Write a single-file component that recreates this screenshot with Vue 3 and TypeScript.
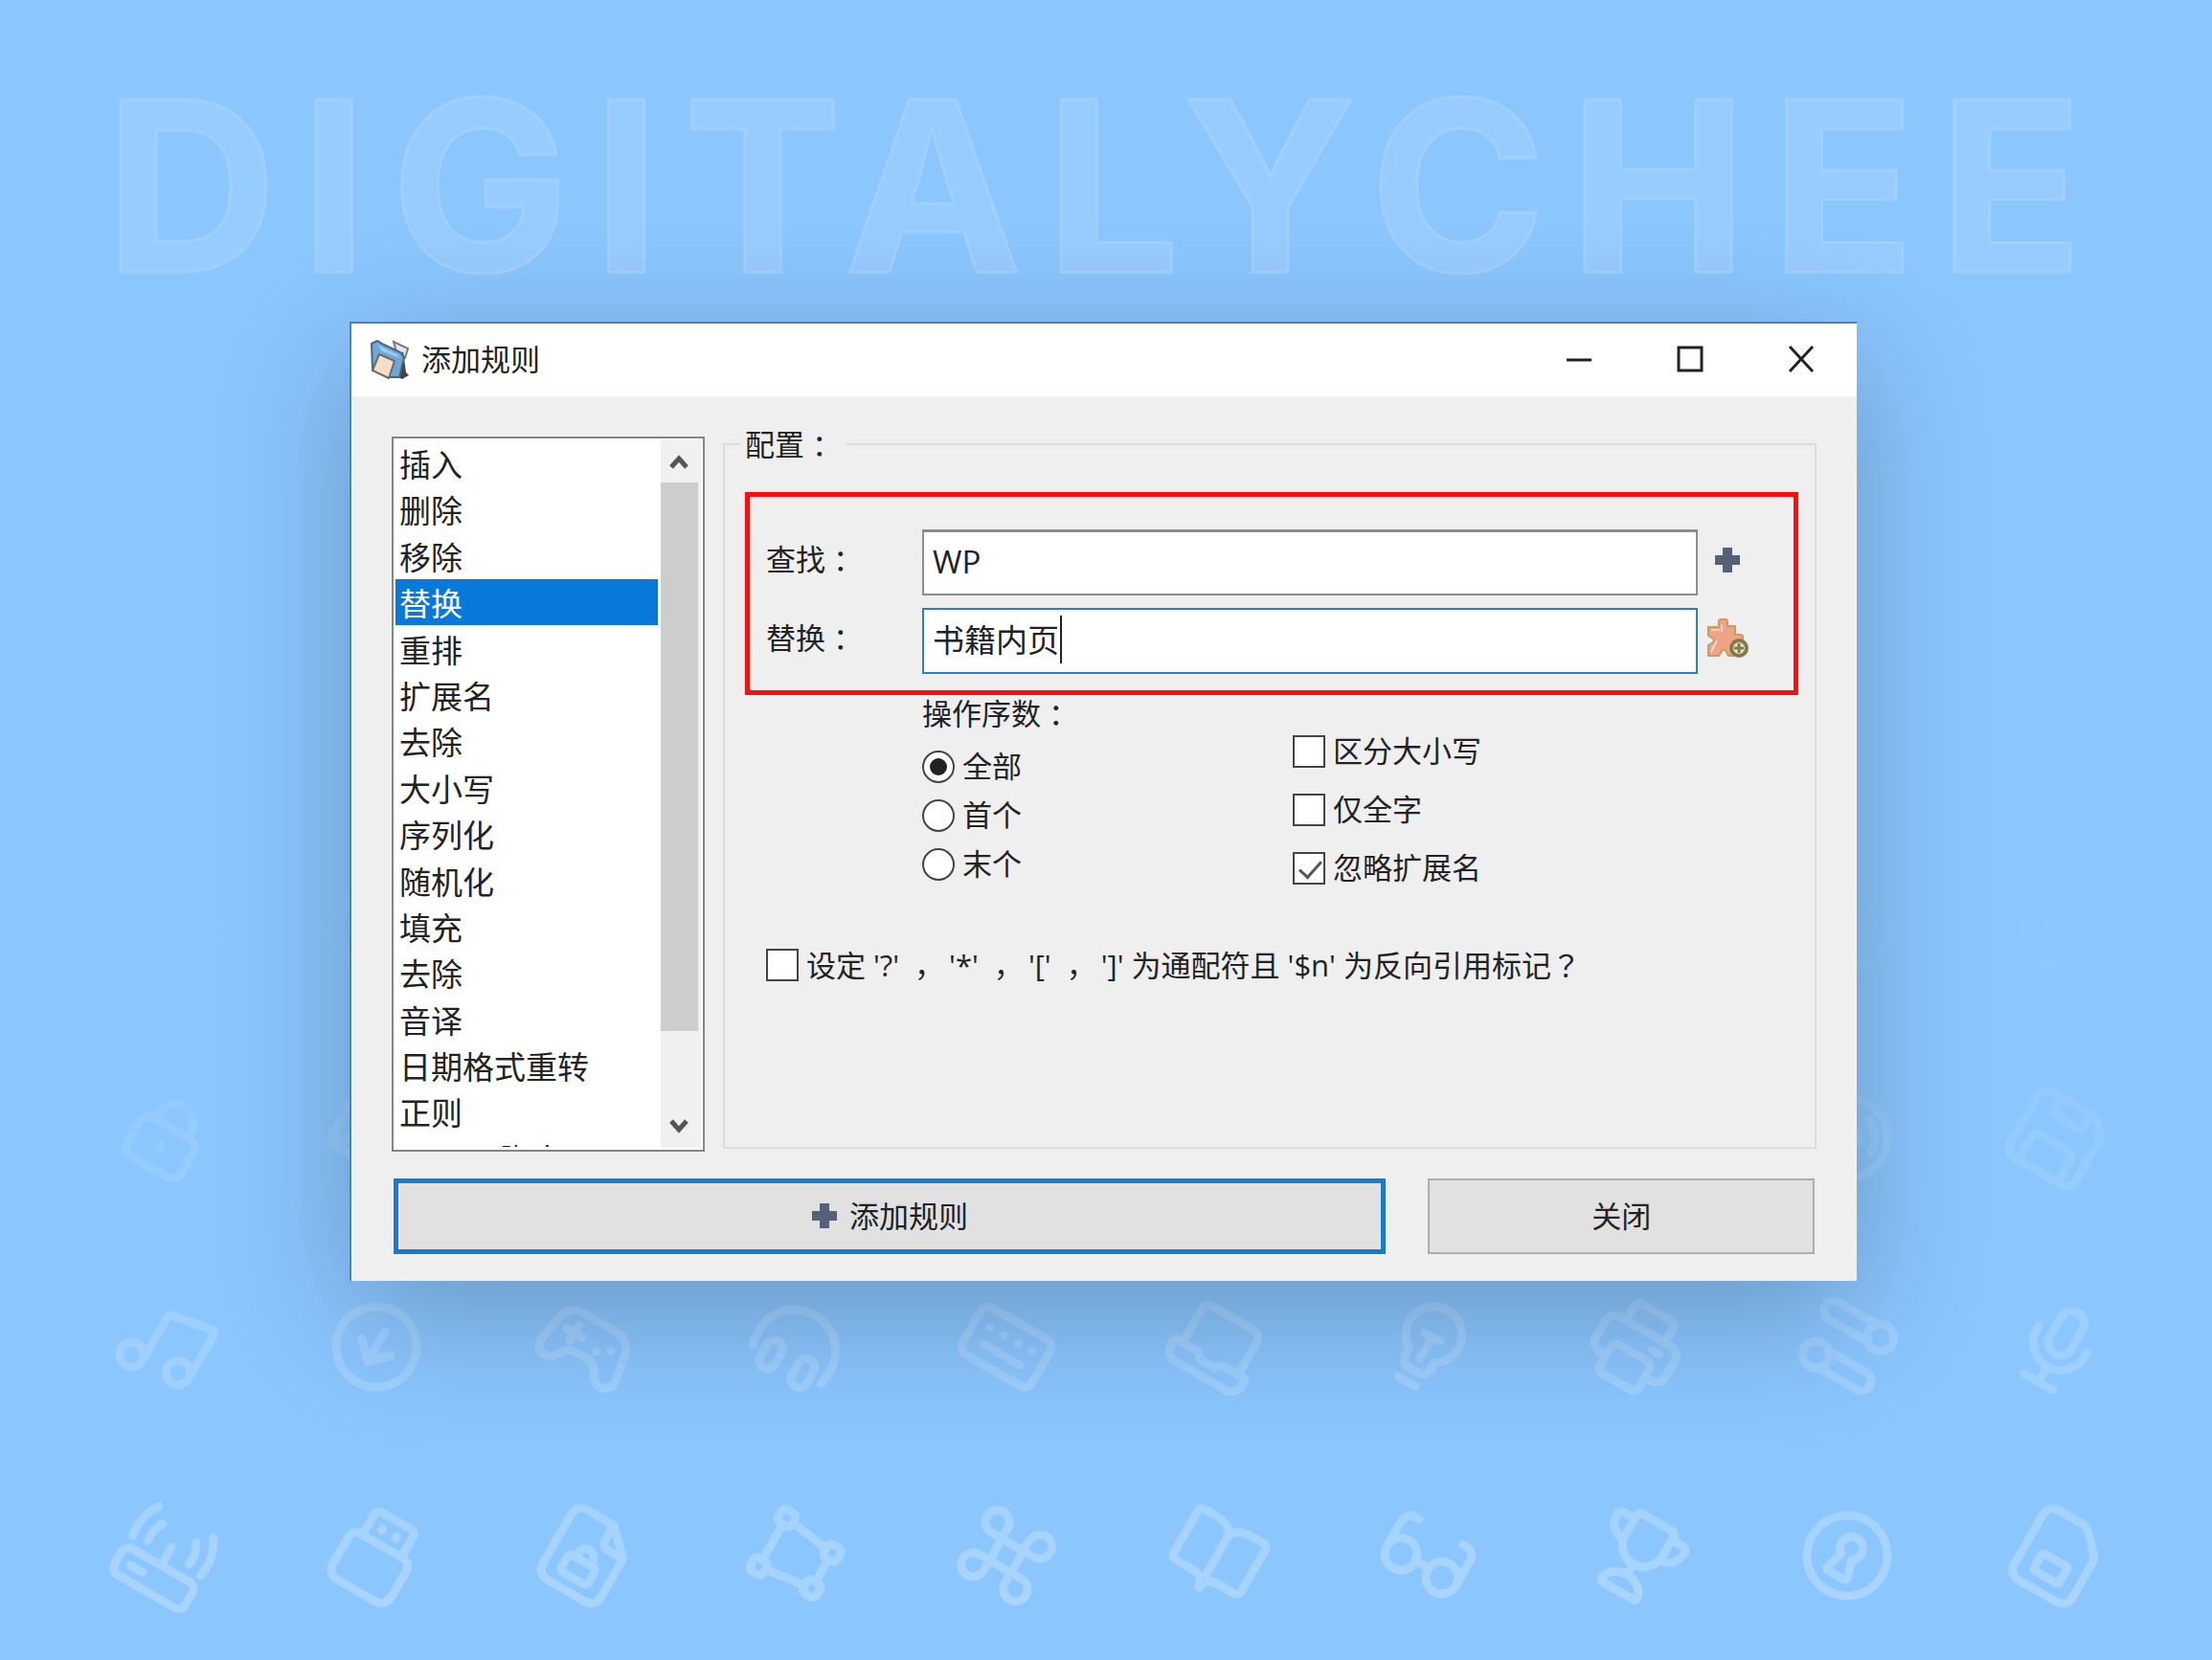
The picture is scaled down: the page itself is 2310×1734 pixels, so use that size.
<script setup lang="ts">
import { ref } from 'vue'

interface Glyph {
  name: string
  d: string
  col: number
  row: number
}

// Outline glyphs on a 24-unit grid; the pattern tilts each of them by 30 degrees.
const glyphs: Glyph[] = [
  { name: 'archive', col: 1, row: 1, d: 'M3.5 4h17a1 1 0 0 1 1 1v3a1 1 0 0 1-1 1h-17a1 1 0 0 1-1-1V5a1 1 0 0 1 1-1zM4.5 9v8A2.5 2.5 0 0 0 7 19.5h10a2.5 2.5 0 0 0 2.5-2.5V9M10 12.5h4' },
  { name: 'box', col: 2, row: 1, d: 'M5 5h14a2 2 0 0 1 2 2v10a2 2 0 0 1-2 2H5a2 2 0 0 1-2-2V7a2 2 0 0 1 2-2z' },
  { name: 'flag', col: 9, row: 1, d: 'M5 5h14a2 2 0 0 1 2 2v8a2 2 0 0 1-2 2H5zM5 5v16' },
  { name: 'shield', col: 10, row: 1, d: 'M12 20.5c-5-1.5-8-5-8-9.5V6l8-3 8 3v5c0 4.5-3 8-8 9.5zM9 11.5l2.2 2.2 4-4' },
  { name: 'lock', col: 1, row: 2, d: 'M7.3 9.5h9a2.5 2.5 0 0 1 2.5 2.5v5a2.5 2.5 0 0 1-2.5 2.5h-9a2.5 2.5 0 0 1-2.5-2.5v-5a2.5 2.5 0 0 1 2.5-2.5zM7.6 9.5V8a4.2 4.2 0 0 1 8.4 0v1.5M11.8 13.9v1.2' },
  { name: 'mail', col: 2, row: 2, d: 'M5 6h14a2 2 0 0 1 2 2v8a2 2 0 0 1-2 2H5a2 2 0 0 1-2-2V8a2 2 0 0 1 2-2zM4 17l6-4' },
  { name: 'disc', col: 9, row: 2, d: 'M12 3a9 9 0 1 1 0 18 9 9 0 0 1 0-18zM12 9.6a2.4 2.4 0 1 1 0 4.8 2.4 2.4 0 0 1 0-4.8zM14 6a6.5 6.5 0 0 1 4.2 6.2' },
  { name: 'floppy', col: 10, row: 2, d: 'M16.2 3.5H6A2.5 2.5 0 0 0 3.5 6v12A2.5 2.5 0 0 0 6 20.5h12a2.5 2.5 0 0 0 2.5-2.5V8c0-.7-.2-1.2-.7-1.7l-2-2c-.4-.5-1-.8-1.6-.8zM8 3.5v3.2a1 1 0 0 0 1 1h6a1 1 0 0 0 1-1V3.5M7 20.5v-6a1.3 1.3 0 0 1 1.3-1.3h7.4a1.3 1.3 0 0 1 1.3 1.3v6' },
  { name: 'music', col: 1, row: 3, d: 'M6.1 14.7a2.7 2.7 0 1 1 0 5.4 2.7 2.7 0 0 1 0-5.4zM17.1 13a2.7 2.7 0 1 1 0 5.4 2.7 2.7 0 0 1 0-5.4zM8.8 17.4V6.3a1 1 0 0 1 .8-1l9-1.7a1 1 0 0 1 1.2 1v11.1' },
  { name: 'download', col: 2, row: 3, d: 'M12 3a9 9 0 1 1 0 18 9 9 0 0 1 0-18zM12 8v7.7M8.2 12l3.8 3.8 3.8-3.8' },
  { name: 'gamepad', col: 3, row: 3, d: 'M7.5 5.7h9a4 4 0 0 1 3.9 3.2l1.1 6.1a2.5 2.5 0 0 1-4.6 1.9l-.9-1.4a3 3 0 0 0-2.5-1.4h-3A3 3 0 0 0 8 15.5l-.9 1.4A2.5 2.5 0 0 1 2.5 15l1.1-6.1a4 4 0 0 1 3.9-3.2zM8.2 8.6v4M6.2 10.6h4M14.4 11.7h.1M17.2 10h.1' },
  { name: 'headphones', col: 4, row: 3, d: 'M3.2 16.4c-.3-1.2-.4-2.5-.4-3.4a9.2 9.2 0 0 1 18.4 0c0 .9-.1 2.2-.4 3.4M7.9 13a1.9 1.9 0 0 1 1.9 1.9v3a1.9 1.9 0 0 1-3.8 0v-3A1.9 1.9 0 0 1 7.9 13zM16.1 13a1.9 1.9 0 0 1 1.9 1.9v3a1.9 1.9 0 0 1-3.8 0v-3a1.9 1.9 0 0 1 1.9-1.9z' },
  { name: 'keyboard', col: 5, row: 3, d: 'M5 6h14a2 2 0 0 1 2 2v8a2 2 0 0 1-2 2H5a2 2 0 0 1-2-2V8a2 2 0 0 1 2-2zM6.6 10h.1M10.2 10h.1M13.8 10h.1M17.3 10h.1M7.3 14h9.4' },
  { name: 'laptop', col: 6, row: 3, d: 'M4.8 15V6.6a2 2 0 0 1 2-2h10.4a2 2 0 0 1 2 2V15M3.5 15H9l1 1.3h4l1-1.3h5.5a.6.6 0 0 1 .6.6v1.3a2.5 2.5 0 0 1-2.5 2.5H5.4a2.5 2.5 0 0 1-2.5-2.5v-1.3a.6.6 0 0 1 .6-.6z' },
  { name: 'bulb', col: 7, row: 3, d: 'M8.7 14.2A6.3 6.3 0 1 1 15.3 14.2v1.6a2.2 2.2 0 0 1-2.2 2.2h-2.2a2.2 2.2 0 0 1-2.2-2.2zM10 9.5h4M12 9.5V15M9.8 20.9h4.4' },
  { name: 'printer', col: 8, row: 3, d: 'M7 8V4.5A1.5 1.5 0 0 1 8.5 3h7A1.5 1.5 0 0 1 17 4.5V8M7 17H5.5A2.5 2.5 0 0 1 3 14.5v-4A2.5 2.5 0 0 1 5.5 8h13a2.5 2.5 0 0 1 2.5 2.5v4a2.5 2.5 0 0 1-2.5 2.5H17M8.5 13.5h7A1.5 1.5 0 0 1 17 15v4.5a1.5 1.5 0 0 1-1.5 1.5h-7A1.5 1.5 0 0 1 7 19.5V15a1.5 1.5 0 0 1 1.5-1.5zM15.4 10.9h1.8' },
  { name: 'toggles', col: 9, row: 3, d: 'M17.4 3.5a3 3 0 1 1 0 6 3 3 0 0 1 0-6zM15.2 8.7H5.4a2.2 2.2 0 0 1 0-4.4h9.8M6.8 14a3 3 0 1 1 0 6 3 3 0 0 1 0-6zM9 14.8h9.6a2.2 2.2 0 0 1 0 4.4H9' },
  { name: 'mic', col: 10, row: 3, d: 'M12.3 3a2.8 2.8 0 0 1 2.8 2.8v5a2.8 2.8 0 0 1-5.6 0v-5A2.8 2.8 0 0 1 12.3 3zM6.1 9.7v1a6.2 6.2 0 0 0 12.4 0v-1M12.3 17v3.8M8.5 20.8h7.6' },
  { name: 'router', col: 1, row: 4, d: 'M4.8 14.5h14.4a2 2 0 0 1 2 2v2.7a2 2 0 0 1-2 2H4.8a2 2 0 0 1-2-2v-2.7a2 2 0 0 1 2-2zM6 17.9h3.2M12 9.8v4.7M7.7 6.2a7 7 0 0 0-1 4.9M5 3.3a11.5 11.5 0 0 0-1.8 8.7M16.3 6.2a7 7 0 0 1 1 4.9M19 3.3a11.5 11.5 0 0 1 1.8 8.7' },
  { name: 'usb', col: 2, row: 4, d: 'M7 9.5V4a1 1 0 0 1 1-1h8a1 1 0 0 1 1 1v5.5M6.5 9.5h11a2 2 0 0 1 2 2v7a2.5 2.5 0 0 1-2.5 2.5H7a2.5 2.5 0 0 1-2.5-2.5v-7a2 2 0 0 1 2-2zM10.2 6v.5M13.8 6v.5' },
  { name: 'secure-file', col: 3, row: 4, d: 'M14 3H7a2.5 2.5 0 0 0-2.5 2.5v13A2.5 2.5 0 0 0 7 21h10a2.5 2.5 0 0 0 2.5-2.5v-10zM14 3v4a1.5 1.5 0 0 0 1.5 1.5h4M9.5 13.4h5a1 1 0 0 1 1 1v2.4a1 1 0 0 1-1 1h-5a1 1 0 0 1-1-1v-2.4a1 1 0 0 1 1-1zM10.2 13.4v-1.1a1.8 1.8 0 0 1 3.6 0v1.1' },
  { name: 'nodes', col: 4, row: 4, d: 'M5 4.1h1.6a.9.9 0 0 1 .9.9v1.6a.9.9 0 0 1-.9.9H5a.9.9 0 0 1-.9-.9V5a.9.9 0 0 1 .9-.9zM17.8 5.8h1.6a.9.9 0 0 1 .9.9v1.6a.9.9 0 0 1-.9.9h-1.6a.9.9 0 0 1-.9-.9V6.7a.9.9 0 0 1 .9-.9zM5 16.6h1.6a.9.9 0 0 1 .9.9v1.6a.9.9 0 0 1-.9.9H5a.9.9 0 0 1-.9-.9v-1.6a.9.9 0 0 1 .9-.9zM17.8 15h1.6a.9.9 0 0 1 .9.9v1.6a.9.9 0 0 1-.9.9h-1.6a.9.9 0 0 1-.9-.9v-1.6a.9.9 0 0 1 .9-.9zM7.5 6l9.4 1.3M5.8 7.5v9.1M18.6 9.2V15M7.5 18.1l9.4-1.2' },
  { name: 'command', col: 5, row: 4, d: 'M14.8 6.5v11a2.7 2.7 0 1 0 2.7-2.7h-11a2.7 2.7 0 1 0 2.7 2.7v-11a2.7 2.7 0 1 0-2.7 2.7h11a2.7 2.7 0 1 0-2.7-2.7' },
  { name: 'book', col: 6, row: 4, d: 'M12 6.7c-.8-1.6-2.3-2.3-4.3-2.3H4.3a1 1 0 0 0-1 1v11a1 1 0 0 0 1 1H9c1.5 0 2.5.7 3 2.8.5-2.1 1.5-2.8 3-2.8h4.7a1 1 0 0 0 1-1v-11a1 1 0 0 0-1-1h-3.4c-2 0-3.5.7-4.3 2.3zM12 6.7v12' },
  { name: 'glasses', col: 7, row: 4, d: 'M6.8 11a3.6 3.6 0 1 1 0 7.2 3.6 3.6 0 0 1 0-7.2zM17.4 11a3.6 3.6 0 1 1 0 7.2 3.6 3.6 0 0 1 0-7.2zM10.4 14.2h3.4M3.2 14.6V8.2a2.4 2.4 0 0 1 2.4-2.4h.9M21 14.6V8.2a2.4 2.4 0 0 0-2.4-2.4h-.9' },
  { name: 'trophy', col: 8, row: 4, d: 'M8.3 3.2h8a.8.8 0 0 1 .8.8v5.2a4.8 4.8 0 0 1-9.6 0V4a.8.8 0 0 1 .8-.8zM7.5 5H4.6a1 1 0 0 0-1 1c0 2.5 1.5 4.1 3.9 4.3M17.1 5h2.9a1 1 0 0 1 1 1c0 2.5-1.5 4.1-3.9 4.3M12.3 14.2v2.6M8.3 20.9c-.4 0-.7-.3-.6-.7.3-2.1 2.2-3.4 4.6-3.4s4.3 1.3 4.6 3.4c.1.4-.2.7-.6.7z' },
  { name: 'keyhole', col: 9, row: 4, d: 'M12 3a9 9 0 1 1 0 18 9 9 0 0 1 0-18zM10.6 12.3a2.6 2.6 0 1 1 2.8 0l1.1 4a.5.5 0 0 1-.5.7h-4a.5.5 0 0 1-.5-.7z' },
  { name: 'sim', col: 10, row: 4, d: 'M7.2 3h6.2c.7 0 1.3.3 1.8.7l3.8 3.9c.4.5.7 1.1.7 1.8v9.1a2.5 2.5 0 0 1-2.5 2.5h-10a2.5 2.5 0 0 1-2.5-2.5v-13a2.5 2.5 0 0 1 2.5-2.5zM9.5 13h5.4a.6.6 0 0 1 .6.6v3.2a.6.6 0 0 1-.6.6H9.5a.6.6 0 0 1-.6-.6v-3.2a.6.6 0 0 1 .6-.6z' },
]

const rules: string[] = [
  '插入', '删除', '移除', '替换', '重排', '扩展名', '去除', '大小写',
  '序列化', '随机化', '填充', '去除', '音译', '日期格式重转', '正则', 'Pascal 脚本',
]
const selectedRule = ref(3)

const findText = ref('WP')
const replaceText = ref('书籍内页')

const occurrences = [
  { value: 'all', label: '全部' },
  { value: 'first', label: '首个' },
  { value: 'last', label: '末个' },
]
const occurrence = ref('all')

const flags = ref([
  { id: 'case', label: '区分大小写', on: false },
  { id: 'whole', label: '仅全字', on: false },
  { id: 'skip-ext', label: '忽略扩展名', on: true },
])
const wildcards = ref(false)
</script>

<template>
  <div class="page">
    <div class="pattern" aria-hidden="true">
      <svg
        v-for="g in glyphs"
        :key="g.name"
        class="glyph"
        viewBox="0 0 24 24"
        :style="{ gridColumn: g.col, gridRow: g.row }"
      >
        <path :d="g.d" />
      </svg>
    </div>

    <h1 class="brand">DIGITALYCHEE</h1>

    <main class="window">
      <header class="titlebar">
        <svg class="app-icon" viewBox="0 0 42 42" aria-hidden="true">
          <path d="M24 2l15 7-3 10-8-3z" fill="#e4e8ea" stroke="#777c82" stroke-width="2" />
          <path d="M34 12l3 22 3 3-7 4-7-3 4-22z" fill="#3d4352" />
          <path d="M1 4l6-3 7 4 17 8 4 5-5 21-9 0L2 31z" fill="#6fa8d8" stroke="#4c6480" stroke-width="2" />
          <path d="M7 5l21 10 2 4-18-7z" fill="#9cc8ea" />
          <path d="M9 15l16 7-6 18-17-8z" fill="#f3dfc6" stroke="#6d6a68" stroke-width="2" />
        </svg>
        <h2 class="title">添加规则</h2>
        <div class="controls">
          <button type="button" aria-label="最小化">
            <svg viewBox="0 0 28 28"><path d="M1 14h26" /></svg>
          </button>
          <button type="button" aria-label="最大化">
            <svg viewBox="0 0 28 28"><path d="M2 1h24v24H2z" /></svg>
          </button>
          <button type="button" aria-label="关闭窗口">
            <svg viewBox="0 0 28 28"><path d="M2 0l24 26M26 0L2 26" /></svg>
          </button>
        </div>
      </header>

      <div class="body">
        <div class="columns">
          <div class="listbox">
            <div class="viewport">
              <ul class="rules" role="listbox" aria-label="规则">
                <li
                  v-for="(rule, i) in rules"
                  :key="i"
                  role="option"
                  :aria-selected="i === selectedRule"
                  :class="{ selected: i === selectedRule }"
                  @click="selectedRule = i"
                >{{ rule }}</li>
              </ul>
            </div>
            <div class="scrollbar">
              <button type="button" aria-label="向上滚动">
                <svg viewBox="0 0 20 18"><path d="M2 15l8-9 8 9" /></svg>
              </button>
              <div class="track"><div class="thumb"></div></div>
              <button type="button" aria-label="向下滚动">
                <svg viewBox="0 0 20 18"><path d="M2 3l8 9 8-9" /></svg>
              </button>
            </div>
          </div>

          <fieldset class="config">
            <legend>配置<span class="colon">：</span></legend>

            <div class="highlight">
              <div class="field">
                <label for="find">查找<span class="colon">：</span></label>
                <div class="box"><input id="find" v-model="findText" type="text" spellcheck="false"></div>
                <button type="button" aria-label="添加查找项">
                  <svg class="plus" viewBox="0 0 28 28"><path d="M9 1h10v8h8v10h-8v8H9v-8H1V9h8z" /></svg>
                </button>
              </div>
              <div class="field">
                <label for="replace">替换<span class="colon">：</span></label>
                <div class="box active">
                  <input id="replace" v-model="replaceText" type="text" spellcheck="false">
                  <span class="caret"></span>
                </div>
                <button type="button" aria-label="插入元标签">
                  <svg class="puzzle" viewBox="0 0 44 42">
                    <path d="M13 9V3q0-2 2-2h5q2 0 2 2v5h8v9h6q2 0 2 3v4l-5 4-5 1v10h-5l-3-6h-3l-4 6H2V28l5-3q2-2 0-4l-5-3V9z" fill="#f0a487" stroke="#c89c68" stroke-width="2" />
                    <path d="M5 12h9M5 35l6-12M16 6v8" stroke="#f8d6c4" stroke-width="2" />
                    <circle cx="34" cy="31" r="8" fill="#e9e6c8" stroke="#85784a" stroke-width="4" />
                    <path d="M34 26v10M29 31h10" stroke="#85784a" stroke-width="3" />
                  </svg>
                </button>
              </div>
            </div>

            <div class="options">
              <div class="occurrences" role="radiogroup" aria-labelledby="occ-title">
                <div id="occ-title" class="group-title">操作序数<span class="colon">：</span></div>
                <label v-for="o in occurrences" :key="o.value" class="choice radio">
                  <input v-model="occurrence" type="radio" name="occurrence" :value="o.value">
                  <span>{{ o.label }}</span>
                </label>
              </div>
              <div class="flags">
                <label v-for="f in flags" :key="f.id" class="choice">
                  <input v-model="f.on" type="checkbox">
                  <span>{{ f.label }}</span>
                </label>
              </div>
            </div>

            <label class="choice wildcard">
              <input v-model="wildcards" type="checkbox">
              <span>设定 '?' <span class="comma">，</span> '*' <span class="comma">，</span> '[' <span class="comma">，</span> ']' 为通配符且 '$n' 为反向引用标记<span class="question">？</span></span>
            </label>
          </fieldset>
        </div>

        <div class="actions">
          <button type="button" class="primary">
            <svg class="plus" viewBox="0 0 28 28" aria-hidden="true"><path d="M9 1h10v8h8v10h-8v8H9v-8H1V9h8z" /></svg>
            添加规则
          </button>
          <button type="button" class="secondary">关闭</button>
        </div>
      </div>
    </main>
  </div>
</template>

<style>
body {
  margin: 0;
  background: #8bc6ff;
}
</style>

<style scoped>
* {
  box-sizing: border-box;
}

.page {
  position: relative;
  min-height: 100vh;
  padding-top: 70px;
  overflow: hidden;
  background: #8bc6ff;
  color: #222;
  font-family: "Open Sans", "Noto Sans CJK SC", sans-serif;
  font-size: 31px;
  line-height: 36px;
}

/* Icon pattern behind the window, fading out towards the top */
.pattern {
  position: absolute;
  right: 0;
  bottom: 0;
  left: 0;
  display: grid;
  grid-template-columns: repeat(10, 1fr);
  grid-template-rows: repeat(4, 218px);
  place-items: center;
  padding: 0 52px 0 64px;
  opacity: 0.27;
  -webkit-mask-image: linear-gradient(to bottom, transparent 6%, #000 100%);
  mask-image: linear-gradient(to bottom, transparent 6%, #000 100%);
}

.glyph {
  width: 112px;
  height: 112px;
  overflow: visible;
  transform: rotate(30deg);
  fill: none;
  stroke: #fff;
  stroke-width: 1.9;
  stroke-linecap: round;
  stroke-linejoin: round;
}

.brand {
  position: relative;
  margin: 0 0 18px;
  color: #98cbff;
  font-family: Inter, sans-serif;
  font-size: 248px;
  font-weight: 750;
  line-height: 248px;
  letter-spacing: 0.1em;
  text-align: center;
  white-space: nowrap;
  -webkit-text-stroke: 3px #a1d0ff;
}

.window {
  position: relative;
  margin: 0 16.05% 0 15.8%;
  border-top: 2px solid #3f86bd;
  border-left: 2px solid #4a87ba;
  background: #efefef;
  box-shadow: 0 36px 128px rgba(0, 0, 0, 0.24);
}

.titlebar {
  display: flex;
  align-items: center;
  height: 76px;
  padding-left: 20px;
  background: #fff;
}

.app-icon {
  width: 42px;
  height: 42px;
}

.title {
  flex: 1;
  margin: 0 0 2px 11px;
  font-size: 31px;
  font-weight: 400;
}

.controls {
  display: flex;
}

button {
  padding: 0;
  border: 0;
  background: none;
  color: inherit;
  font: inherit;
}

.controls button {
  display: flex;
  align-items: center;
  justify-content: center;
  width: 116px;
  height: 76px;
}

.controls svg {
  width: 28px;
  height: 28px;
  overflow: visible;
  fill: none;
  stroke: #222;
  stroke-width: 3;
}

.body {
  padding: 34px 42px 28px;
}

.columns {
  display: flex;
  gap: 19px;
}

.listbox {
  display: flex;
  flex: none;
  width: 327px;
  height: 747px;
  margin-top: 8px;
  padding: 2px;
  border: 2px solid #858585;
  background: #fff;
}

.viewport {
  flex: 1;
  height: 738px;
  overflow: hidden;
}

.rules {
  display: flex;
  flex-direction: column;
  justify-content: space-between;
  height: 774px;
  margin: 0;
  padding: 0;
  list-style: none;
  font-size: 33px;
  line-height: 52px;
}

.rules li {
  flex: none;
  height: 48px;
  padding-left: 4px;
}

.rules .selected {
  background: #0879d9;
  color: #fff;
}

.scrollbar {
  display: flex;
  flex: none;
  flex-direction: column;
  width: 42px;
  margin-left: 3px;
  padding-right: 3px;
  background: #f0f0f0;
}

.scrollbar button {
  display: flex;
  align-items: center;
  justify-content: center;
  height: 44px;
}

.scrollbar svg {
  width: 20px;
  height: 18px;
  fill: none;
  stroke: #555;
  stroke-width: 5;
}

.track {
  flex: 1;
}

.thumb {
  height: 88%;
  background: #cdcdcd;
}

.config {
  flex: 1;
  min-width: 0;
  margin: 0 0 3px;
  padding: 34px 17px 0 21px;
  border: 2px solid #dcdcdc;
}

.config legend {
  margin-left: -5px;
  padding: 0 13px 0 5px;
  line-height: 32px;
  white-space: nowrap;
}

/* Full-width marks sit near the middle of their cell */
.colon {
  margin: 0 -8px 0 8px;
}

.comma {
  margin: 0 -3px 0 8px;
}

.question {
  font-family: "Noto Sans CJK TC", sans-serif;
}

.highlight {
  display: flex;
  flex-direction: column;
  gap: 13px;
  padding: 34px 47px 17px 17px;
  border: 5px solid #f90d0d;
}

.field {
  display: flex;
  align-items: center;
}

.field label {
  flex: none;
  width: 163px;
  margin-bottom: 8px;
}

.box {
  position: relative;
  display: flex;
  flex: 1;
  height: 69px;
  border: 2px solid #8c8c8c;
  border-top-width: 3px;
  background: #fff;
}

.box.active {
  border: 2px solid #2f7fbd;
}

.box input {
  width: 100%;
  padding: 0 9px 2px;
  border: 0;
  outline: 0;
  background: none;
  color: inherit;
  font: inherit;
  font-size: 33px;
}

.caret {
  position: absolute;
  top: 6px;
  left: 142px;
  width: 2px;
  height: 50px;
  background: #222;
}

.field button {
  display: flex;
  align-items: center;
  justify-content: center;
  width: 44px;
  height: 44px;
  margin: 0 0 6px 9px;
}

.plus {
  width: 28px;
  height: 28px;
  fill: #566179;
}

.puzzle {
  width: 44px;
  height: 42px;
}

.options {
  display: grid;
  grid-template-columns: 387px 1fr;
  padding-left: 185px;
}

.group-title {
  margin-bottom: 11px;
  line-height: 38px;
}

.choice {
  display: flex;
  align-items: center;
  gap: 8px;
  height: 61px;
}

.choice span {
  padding-bottom: 1px;
}

.choice.radio {
  height: 51px;
}

.flags {
  padding-top: 28px;
}

.choice input {
  position: relative;
  flex: none;
  width: 34px;
  height: 34px;
  margin: 0;
  border: 2px solid #444;
  background: #fff;
  appearance: none;
}

.choice input[type="radio"] {
  border-radius: 50%;
}

.choice input[type="radio"]:checked::after {
  position: absolute;
  inset: 6px;
  border-radius: 50%;
  background: #222;
  content: "";
}

.choice input[type="checkbox"]:checked::after {
  position: absolute;
  top: 2px;
  left: 10px;
  width: 10px;
  height: 20px;
  border-right: 3px solid #555;
  border-bottom: 3px solid #555;
  transform: rotate(42deg);
  content: "";
}

.choice.wildcard {
  height: 36px;
  margin: 53px 0 0 22px;
  white-space: nowrap;
}

.actions {
  display: flex;
  gap: 44px;
  margin-top: 28px;
  padding: 0 2px;
}

.actions button {
  display: flex;
  align-items: center;
  justify-content: center;
  gap: 12px;
  height: 79px;
  padding-bottom: 2px;
  background: #e1e1e1;
}

.actions .primary {
  flex: 1036 0 0;
  border: 5px solid #1a7bcd;
}

.actions .secondary {
  flex: 404 0 0;
  border: 2px solid #adadad;
}
</style>
